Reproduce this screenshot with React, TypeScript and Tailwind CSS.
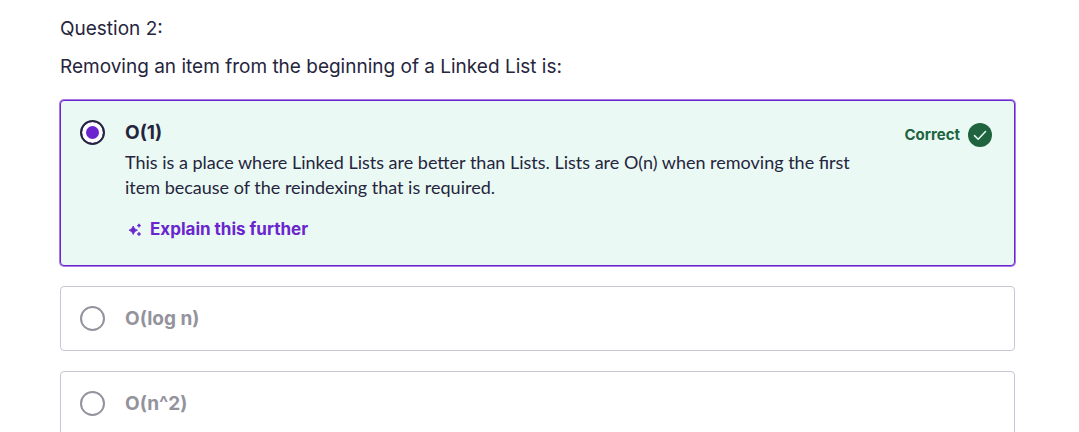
import { ReactNode } from "react";

function Sparkles() {
  return (
    <svg viewBox="0 0 14 14" className="size-3.5 shrink-0" fill="currentColor" aria-hidden="true">
      <path d="M5.2 3 Q6 6.4 9.4 7.2 Q6 8 5.2 11.4 Q4.4 8 1 7.2 Q4.4 6.4 5.2 3Z" stroke="currentColor" strokeWidth="0.9" strokeLinejoin="round" />
      <path d="M11 0.8 Q11.5 2.1 12.8 2.6 Q11.5 3.1 11 4.4 Q10.5 3.1 9.2 2.6 Q10.5 2.1 11 0.8Z" stroke="currentColor" strokeWidth="0.7" />
      <path d="M11 9.2 Q11.5 10.5 12.8 11 Q11.5 11.5 11 12.8 Q10.5 11.5 9.2 11 Q10.5 10.5 11 9.2Z" stroke="currentColor" strokeWidth="0.7" />
    </svg>
  );
}

function CheckBadge() {
  return (
    <svg viewBox="0 0 24 24" className="size-6 shrink-0" aria-hidden="true">
      <circle cx="12" cy="12" r="12" fill="#20643f" />
      <path d="M6.5 12.6 10.2 16.2 17.5 8.6" fill="none" stroke="#ebfaf5" strokeWidth="1.5" strokeLinecap="round" strokeLinejoin="round" />
    </svg>
  );
}

type OptionProps = { id: string; label: string; checked?: boolean; children?: ReactNode };

function Option({ id, label, checked = false, children }: OptionProps) {
  return (
    <div
      className={
        checked
          ? "flex items-start gap-5 rounded-[4px] border border-[#6a25cf] bg-[#eaf9f4] px-[19px] pt-[19px] pb-[23px] text-[#25253d] ring-1 ring-[#6a25cf]/60"
          : "flex items-start gap-5 rounded-[4px] border border-[#c9c6d6] bg-white px-[19px] py-[19px] text-[#94939d]"
      }
    >
      <input
        type="radio"
        name="answer"
        id={id}
        defaultChecked={checked}
        className="size-[25px] shrink-0 appearance-none rounded-full border-2 border-current bg-white checked:bg-[#6a25cf] checked:shadow-[inset_0_0_0_4px_#fff]"
      />
      <div className="min-w-0 grow">
        <label htmlFor={id} className="block text-[19px] leading-[25px] font-bold">
          {label}
        </label>
        {children}
      </div>
      {checked && (
        <div className="flex shrink-0 items-center gap-2 pt-[3px] pr-[3px] text-[15px] leading-6 font-bold text-[#20643f]">
          Correct
          <CheckBadge />
        </div>
      )}
    </div>
  );
}

export default function App() {
  return (
    <main className="h-screen overflow-hidden bg-white pt-4 pr-16 pl-[60px] font-['Inter',sans-serif] text-[#25253d]">
      <p className="text-[19px] leading-[25px]">Question 2:</p>
      <p className="mt-[13px] text-[19px] leading-[25px]">Removing an item from the beginning of a Linked List is:</p>
      <form className="mt-[21px] flex flex-col gap-5">
        <Option id="o-1" label="O(1)" checked>
          <p className="mt-[5px] max-w-[730px] font-['Lato',sans-serif] text-[18px] leading-[25px]">
            This is a place where Linked Lists are better than Lists. Lists are O(n) when removing the first item because
            of the reindexing that is required.
          </p>
          <button type="button" className="mt-[17px] ml-[3px] flex items-center gap-2 text-[17px] leading-[25px] font-bold text-[#6a25cf]">
            <Sparkles />
            Explain this further
          </button>
        </Option>
        <Option id="o-log-n" label="O(log n)" />
        <Option id="o-n-2" label="O(n^2)" />
      </form>
    </main>
  );
}
